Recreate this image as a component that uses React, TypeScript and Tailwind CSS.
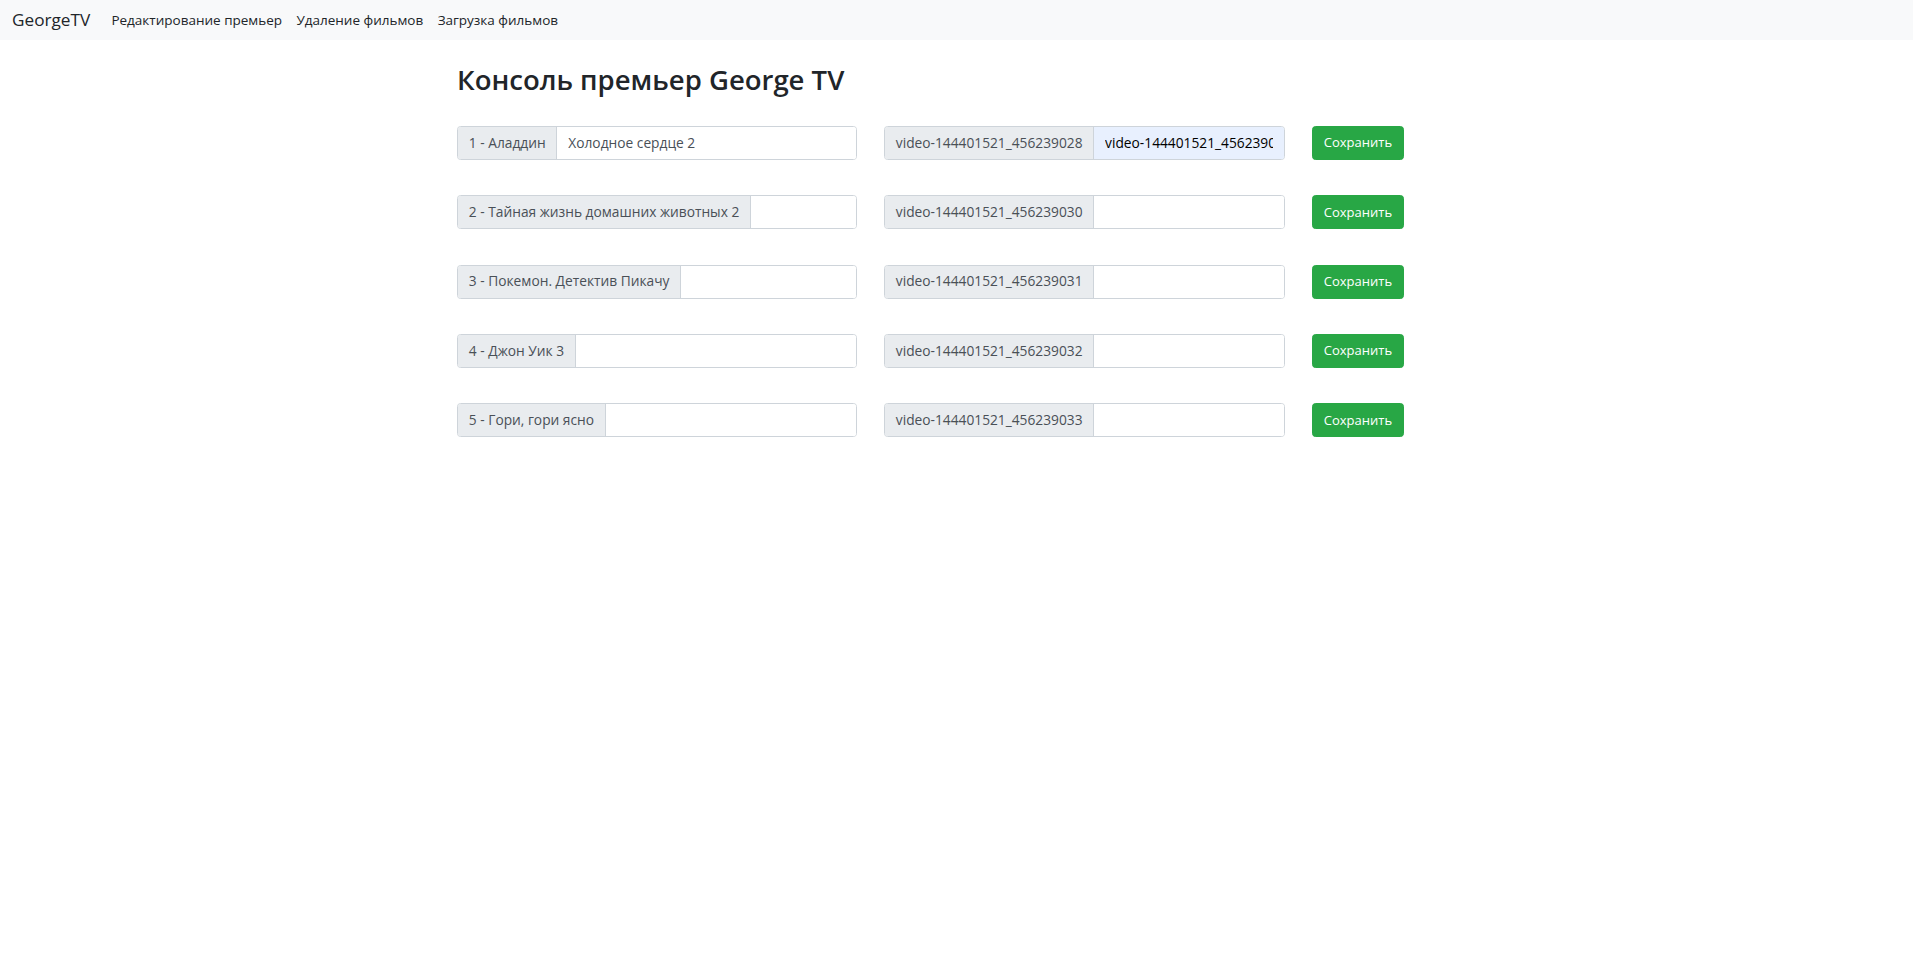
import React from 'react';

type Premiere = {
  title: string;
  value: string;
  video: string;
  videoValue: string;
};

const premieres: Premiere[] = [
  { title: '1 - Аладдин', value: 'Холодное сердце 2', video: 'video-144401521_456239028', videoValue: 'video-144401521_456239028' },
  { title: '2 - Тайная жизнь домашних животных 2', value: '', video: 'video-144401521_456239030', videoValue: '' },
  { title: '3 - Покемон. Детектив Пикачу', value: '', video: 'video-144401521_456239031', videoValue: '' },
  { title: '4 - Джон Уик 3', value: '', video: 'video-144401521_456239032', videoValue: '' },
  { title: '5 - Гори, гори ясно', value: '', video: 'video-144401521_456239033', videoValue: '' },
];

const InputGroup: React.FC<{ label: string; value: string; filled?: boolean }> = ({ label, value, filled }) => (
  <div className="flex h-[34px] w-full rounded-[3.6px] border border-[#ced4da] overflow-hidden text-[13.75px]">
    <span className="flex items-center px-[10.8px] bg-[#e9ecef] text-[#495057] border-r border-[#ced4da] whitespace-nowrap">
      {label}
    </span>
    <input
      defaultValue={value}
      className={`flex-1 min-w-0 px-[10.8px] outline-none ${filled ? 'bg-[#e8f0fe] text-black' : 'bg-white text-[#495057]'}`}
    />
  </div>
);

export default function App() {
  return (
    <div className="min-h-screen bg-white text-[13.5px] text-[#212529]" style={{ fontFamily: '"Open Sans", "Noto Sans", sans-serif' }}>
      <nav className="h-[40px] bg-[#f8f9fa] flex items-center px-[12px]">
        <span className="text-[17.2px] text-[#212529] mr-[14px]">GeorgeTV</span>
        <ul className="flex">
          <li className="px-[7.2px]">Редактирование премьер</li>
          <li className="px-[7.2px]">Удаление фильмов</li>
          <li className="px-[7.2px]">Загрузка фильмов</li>
        </ul>
      </nav>

      <main className="w-[999px] mx-auto">
        <h2 className="mt-[23px] mb-[28.5px] text-[27.5px] font-semibold leading-[1.25] text-[#212529]">Консоль премьер George TV</h2>

        <div className="flex flex-col gap-[35.4px]">
          {premieres.map((p, idx) => (
            <div key={idx} className="flex items-center">
              <div className="w-[400px]">
                <InputGroup label={p.title} value={p.value} />
              </div>
              <div className="w-[401px] ml-[27px]">
                <InputGroup label={p.video} value={p.videoValue} filled={idx === 0} />
              </div>
              <button className="ml-[27px] h-[34px] px-[10.8px] rounded-[3.6px] bg-[#28a745] text-white text-[13px] border border-[#28a745]">
                Сохранить
              </button>
            </div>
          ))}
        </div>
      </main>
    </div>
  );
}
